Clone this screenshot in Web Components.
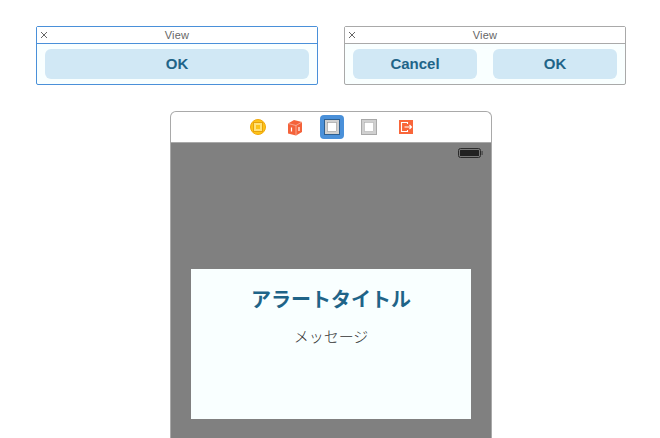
<!DOCTYPE html>
<html lang="ja">
<head>
<meta charset="utf-8">
<title>View</title>
<style>
  html, body { margin: 0; height: 438px; overflow: hidden; background: #fff; }
  body { font-family: "Liberation Sans", "Noto Sans CJK JP", sans-serif; }
</style>
</head>
<body>
<storyboard-page>
  <view-frame slot="top" selected>
    <alert-button>OK</alert-button>
  </view-frame>
  <view-frame slot="top">
    <alert-button>Cancel</alert-button>
    <alert-button>OK</alert-button>
  </view-frame>
  <scene-frame slot="scene">
    <alert-card title-text="アラートタイトル" message="メッセージ"></alert-card>
  </scene-frame>
</storyboard-page>

<template id="page-template">
  <style>
    :host { display: block; width: 660px; height: 438px; overflow: hidden; }
    .top { display: flex; gap: 26px; padding: 26px 0 0 36px; }
    .bottom { display: flex; justify-content: center; padding: 26px 0 0 2px; }
  </style>
  <div class="top"><slot name="top"></slot></div>
  <div class="bottom"><slot name="scene"></slot></div>
</template>

<template id="frame-template">
  <style>
    :host {
      display: block;
      box-sizing: border-box;
      width: 282px;
      height: 59px;
      border: 1px solid #a9a9a9;
      border-radius: 2px;
      background: #f9ffff;
      --line: #a9a9a9;
    }
    :host([selected]) { border-color: #4a90d9; --line: #4a90d9; }
    .bar {
      position: relative;
      box-sizing: border-box;
      height: 17px;
      background: #fff;
      border-bottom: 1px solid var(--line);
      font-size: 11px;
      letter-spacing: .2px;
      line-height: 16px;
      color: #666;
      text-align: center;
    }
    .close { position: absolute; left: 3px; top: 4px; width: 8px; height: 8px; }
    .buttons { display: flex; gap: 16px; padding: 5px 8px 0; }
  </style>
  <div class="bar">
    <svg class="close" viewBox="0 0 8 8"><path d="M1 1l6 6M7 1l-6 6" stroke="#666" stroke-width="1" fill="none"/></svg>
    View
  </div>
  <div class="buttons"><slot></slot></div>
</template>

<template id="button-template">
  <style>
    :host {
      display: block;
      flex: 1;
      height: 30px;
      border-radius: 6px;
      background: #d1e8f5;
      color: #1f6488;
      font-size: 15px;
      font-weight: bold;
      line-height: 30px;
      text-align: center;
    }
  </style>
  <slot></slot>
</template>

<template id="scene-template">
  <style>
    :host {
      display: block;
      box-sizing: border-box;
      width: 322px;
      height: 340px;
      border: 1px solid #a9a9a9;
      border-bottom: 0;
      border-radius: 6px 6px 0 0;
      overflow: hidden;
      background: #fff;
    }
    .tools {
      display: flex;
      justify-content: center;
      align-items: center;
      gap: 13px;
      box-sizing: border-box;
      height: 31px;
      padding-left: 2px;
      border-bottom: 1px solid #a9a9a9;
    }
    .tools svg { display: block; width: 24px; height: 24px; }
    .screen {
      position: relative;
      box-sizing: border-box;
      height: 297px;
      padding: 126px 20px 0;
      background: #808080;
    }
    .battery { position: absolute; right: 8px; top: 5px; width: 25px; height: 10px; }
  </style>
  <div class="tools">
    <svg viewBox="0 0 24 24">
      <circle cx="12" cy="12" r="7.500" fill="#fcc419" stroke="#f2a80c"/>
      <rect x="7.500" y="7.500" width="9" height="9" fill="#ffe27a" stroke="#e8a30c"/>
      <rect x="10" y="10" width="4" height="4" fill="#fcc419"/>
    </svg>
    <svg viewBox="0 0 24 24">
      <path d="M5 8.500l6-3.500 8 2v10l-6 3.500-8-2z" fill="#f4623a"/>
      <path d="M5 8.500l8 2 6-3.500M13 10.500v10" stroke="#f9b7a4" stroke-width=".8" fill="none"/>
      <path d="M8.500 12.500v4M16 12v4" stroke="#fff" stroke-width="1.200" fill="none"/>
    </svg>
    <svg viewBox="0 0 24 24">
      <rect width="24" height="24" rx="4" fill="#4a90d9"/>
      <rect x="4.500" y="4.500" width="15" height="15" fill="#d0d0d0" stroke="#2f5f8f"/>
      <rect x="7.500" y="7.500" width="9" height="9" fill="#fff" stroke="#8a8a8a" stroke-width=".5"/>
    </svg>
    <svg viewBox="0 0 24 24">
      <rect x="4.500" y="4.500" width="15" height="15" fill="#d0d0d0" stroke="#a9a9a9"/>
      <rect x="7.500" y="7.500" width="9" height="9" fill="#fff" stroke="#a9a9a9" stroke-width=".5"/>
    </svg>
    <svg viewBox="0 0 24 24">
      <rect x="5" y="5" width="14" height="14" fill="#f9663a"/>
      <path d="M13.500 9V7.500H7.500v9h6V15M10.500 12h7M15.500 10l2 2-2 2" stroke="#fff" stroke-width="1.100" fill="none"/>
    </svg>
  </div>
  <div class="screen">
    <svg class="battery" viewBox="0 0 25 10">
      <rect x=".5" y=".5" width="22" height="9" rx="2" fill="#777" stroke="#2a2a2a"/>
      <rect x="2" y="2" width="19" height="6" rx=".5" fill="#222"/>
      <rect x="23.500" y="3" width="1.200" height="4" fill="#444"/>
    </svg>
    <slot></slot>
  </div>
</template>

<template id="alert-template">
  <style>
    :host {
      display: block;
      box-sizing: border-box;
      height: 150px;
      padding-top: 17px;
      background: #f9ffff;
      text-align: center;
      font-family: "Noto Sans CJK JP", "Liberation Sans", sans-serif;
    }
    h1 { margin: 0; font-size: 20px; line-height: 26px; font-weight: 700; color: #1f6488; }
    p { margin: 13px 0 0; font-size: 15px; line-height: 22px; font-weight: 300; color: #333; }
  </style>
  <h1></h1>
  <p></p>
</template>

<script>
  function openShadow(el, id) {
    const root = el.attachShadow({ mode: 'open' });
    root.appendChild(document.getElementById(id).content.cloneNode(true));
    return root;
  }

  class StoryboardPage extends HTMLElement {
    constructor() { super(); openShadow(this, 'page-template'); }
  }
  class ViewFrame extends HTMLElement {
    constructor() { super(); openShadow(this, 'frame-template'); }
  }
  class AlertButton extends HTMLElement {
    constructor() { super(); openShadow(this, 'button-template'); }
  }
  class SceneFrame extends HTMLElement {
    constructor() { super(); openShadow(this, 'scene-template'); }
  }
  class AlertCard extends HTMLElement {
    constructor() { super(); openShadow(this, 'alert-template'); }
    connectedCallback() {
      this.shadowRoot.querySelector('h1').textContent = this.getAttribute('title-text');
      this.shadowRoot.querySelector('p').textContent = this.getAttribute('message');
    }
  }

  customElements.define('storyboard-page', StoryboardPage);
  customElements.define('view-frame', ViewFrame);
  customElements.define('alert-button', AlertButton);
  customElements.define('scene-frame', SceneFrame);
  customElements.define('alert-card', AlertCard);
</script>
</body>
</html>
